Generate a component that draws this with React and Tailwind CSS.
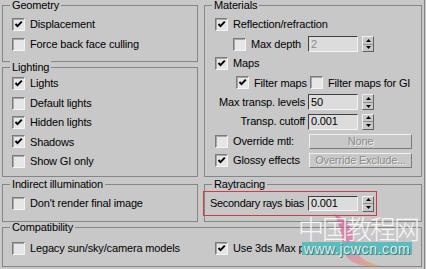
import React from 'react';

const BG = 'bg-[#c8c8c8]';

function Check({ checked }) {
  return (
    <span className="flex h-[13px] w-[13px] shrink-0 items-center justify-center border border-t-[#7a7a7a] border-l-[#7a7a7a] border-b-[#f4f4f4] border-r-[#f4f4f4] bg-[#e6e6e6] shadow-[inset_1px_1px_0_#a8a8a8]">
      {checked && (
        <svg width="9" height="9" viewBox="0 0 9 9">
          <path d="M1.5 4 L3.5 6.2 L7.8 1.6" fill="none" stroke="#000" strokeWidth="1.9" />
        </svg>
      )}
    </span>
  );
}

function CheckRow({ checked, label, className = '' }) {
  return (
    <div className={`flex h-[19.4px] items-center gap-[5px] whitespace-nowrap ${className}`}>
      <Check checked={checked} />
      <span>{label}</span>
    </div>
  );
}

function Group({ title, className = '', children }) {
  return (
    <div className={`border border-[#868686] ${className}`}>
      <div className={`-mt-[7px] ml-[7px] w-fit px-[2px] leading-[13px] ${BG}`}>{title}</div>
      {children}
    </div>
  );
}

function Field({ value, disabled, h = 'h-[16px]' }) {
  return (
    <div
      className={`flex ${h} w-[50px] shrink-0 items-center border border-t-[#404040] border-l-[#404040] border-b-[#f4f4f4] border-r-[#f4f4f4] bg-[#dcdcdc] pl-[2px] ${disabled ? 'text-[#8c8c8c]' : 'text-black'}`}
    >
      {value}
    </div>
  );
}

function Spinner() {
  return (
    <div className="ml-[4px] flex h-[16px] w-[12px] shrink-0 flex-col border border-t-[#f0f0f0] border-l-[#f0f0f0] border-b-[#606060] border-r-[#606060]">
      <div className="flex flex-1 items-center justify-center border-b border-[#909090]">
        <svg width="5" height="3" viewBox="0 0 5 3">
          <path d="M0 3 L2.5 0 L5 3 Z" fill="#000" />
        </svg>
      </div>
      <div className="flex flex-1 items-center justify-center">
        <svg width="5" height="3" viewBox="0 0 5 3">
          <path d="M0 0 L2.5 3 L5 0 Z" fill="#000" />
        </svg>
      </div>
    </div>
  );
}

function Btn({ label }) {
  return (
    <div className="flex h-[15px] w-[103px] items-center justify-center border border-t-[#f0f0f0] border-l-[#f0f0f0] border-b-[#7a7a7a] border-r-[#7a7a7a] text-[#8c8c8c] [text-shadow:1px_1px_0_#eeeeee]">
      {label}
    </div>
  );
}

export default function App() {
  return (
    <div
      className={`relative h-[269px] w-[426px] overflow-hidden ${BG} text-[11px] tracking-[-0.15px] text-black`}
      style={{ fontFamily: '"Liberation Sans", Arial, sans-serif' }}
    >
      <div className="h-full w-[425px] border-r border-[#868686] pl-[2px] pt-[5px]">
        <div className="flex gap-[6px]">
          {/* left column */}
          <div className="flex w-[196px] flex-col">
            <Group title="Geometry" className="h-[57px]">
              <div className="pl-[9px] pt-[3px]">
                <CheckRow checked label="Displacement" />
                <CheckRow label="Force back face culling" />
              </div>
            </Group>
            <Group title="Lighting" className="mt-[5px] h-[110px]">
              <div className="pl-[9px]">
                <CheckRow checked label="Lights" />
                <CheckRow label="Default lights" />
                <CheckRow checked label="Hidden lights" />
                <CheckRow checked label="Shadows" />
                <CheckRow label="Show GI only" />
              </div>
            </Group>
            <Group title="Indirect illumination" className="mt-[7px] h-[38px]">
              <div className="pl-[9px] pt-[3px]">
                <CheckRow label="Don't render final image" />
              </div>
            </Group>
          </div>

          {/* right column */}
          <div className="flex w-[218px] flex-col">
            <Group title="Materials" className="h-[172px]">
              <div className="pt-[3px]">
                <CheckRow checked label="Reflection/refraction" className="pl-[10px]" />
                <div className="flex h-[19.4px] items-center">
                  <div className="flex w-[103px] items-center gap-[5px] pl-[28px]">
                    <Check />
                    <span>Max depth</span>
                  </div>
                  <Field value="2" disabled />
                  <Spinner />
                </div>
                <CheckRow checked label="Maps" className="pl-[10px]" />
                <div className="flex h-[19.4px] items-center">
                  <div className="flex w-[105px] items-center gap-[5px] pl-[31px]">
                    <Check checked />
                    <span>Filter maps</span>
                  </div>
                  <CheckRow label="Filter maps for GI" />
                </div>
                <div className="flex h-[19.4px] items-center">
                  <div className="w-[103px] whitespace-nowrap pr-[3px] text-right">Max transp. levels</div>
                  <Field value="50" />
                  <Spinner />
                </div>
                <div className="flex h-[19.4px] items-center">
                  <div className="w-[103px] whitespace-nowrap pr-[3px] text-right">Transp. cutoff</div>
                  <Field value="0.001" />
                  <Spinner />
                </div>
                <div className="flex h-[19.4px] items-center">
                  <CheckRow label="Override mtl:" className="w-[104px] pl-[10px]" />
                  <Btn label="None" />
                </div>
                <div className="flex h-[19.4px] items-center">
                  <CheckRow checked label="Glossy effects" className="w-[104px] pl-[10px]" />
                  <Btn label="Override Exclude..." />
                </div>
              </div>
            </Group>
            <Group title="Raytracing" className="mt-[7px] h-[38px]">
              <div className="-ml-[2px] flex h-[25px] w-[174px] items-center border border-[#d23c46]">
                <div className="w-[104px] whitespace-nowrap pl-[6px] tracking-[-0.3px]">Secondary rays bias</div>
                <Field value="0.001" h="h-[15px]" />
                <Spinner />
              </div>
            </Group>
          </div>
        </div>

        <Group title="Compatibility" className="mt-[5px] h-[40px] w-[420px]">
          <div className="flex pt-[5px]">
            <CheckRow label="Legacy sun/sky/camera models" className="w-[204px] pl-[9px]" />
            <CheckRow checked label="Use 3ds Max photometric scale" className="pl-[8px]" />
          </div>
        </Group>
      </div>

      {/* watermark overlay */}
      <svg className="absolute left-[320px] top-[210px] opacity-60" width="70" height="59" viewBox="0 0 70 59">
        <defs>
          <linearGradient id="sw" x1="0" y1="0" x2="1" y2="1">
            <stop offset="0" stopColor="#d0408a" />
            <stop offset="0.6" stopColor="#e07aa0" />
            <stop offset="1" stopColor="#e8a040" />
          </linearGradient>
        </defs>
        <path d="M14 4 C30 10 36 24 34 34 C34 44 44 52 60 56 C40 58 26 52 24 40 C22 26 20 14 14 4 Z" fill="url(#sw)" />
      </svg>
      <div
        className="absolute left-[298px] top-[215px] flex text-[26px] leading-none text-white opacity-85"
        style={{ fontFamily: '"Noto Sans CJK SC", sans-serif', fontWeight: 300 }}
      >
        <span className="w-[24px]">中</span>
        <span className="w-[24px]">国</span>
        <span className="w-[24px]">教</span>
        <span className="w-[24px]">程</span>
        <span className="w-[24px]">网</span>
      </div>
      <div className="absolute left-[302px] top-[242px] flex h-[13px] w-[110px] items-center justify-center bg-[#5cbcbc] text-[14px] leading-none tracking-[0.6px] text-[#d8f2f2] [text-shadow:1px_1px_0_#5a6a6a]">
        www.jcwcn.com
      </div>
    </div>
  );
}
